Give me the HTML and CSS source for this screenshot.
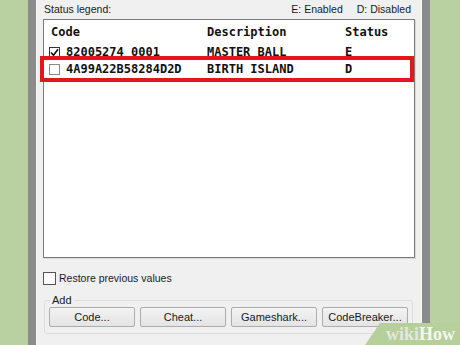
FILE: index.html
```html
<!DOCTYPE html>
<html>
	<head>
		<title>Cheats</title>
		<link rel="stylesheet" href="styles.css">
	</head>
	<body>
		<div class="window">
			<div class="panel">
				<div class="legend">
					<span class="legend-title">Status legend:</span>
					<span class="legend-item">E: Enabled</span>
					<span class="legend-item">D: Disabled</span>
				</div>
				<div class="list">
					<div class="row head">
						<span class="col-code">Code</span>
						<span>Description</span>
						<span>Status</span>
					</div>
					<div class="row">
						<span class="col-code"><span class="check checked">
							<svg width="9" height="9" viewBox="0 0 9 9"><path d="M1 4.5 L3.5 7.2 L8 1.2" fill="none" stroke="#111" stroke-width="1.6"/></svg>
						</span>82005274 0001</span>
						<span>MASTER BALL</span>
						<span>E</span>
					</div>
					<div class="row">
						<span class="col-code"><span class="check"></span>4A99A22B58284D2D</span>
						<span>BIRTH ISLAND</span>
						<span>D</span>
					</div>
				</div>
				<label class="restore"><span class="box"></span>Restore previous values</label>
				<fieldset class="group">
					<legend>Add</legend>
					<div class="buttons">
						<button>Code...</button>
						<button>Cheat...</button>
						<button>Gameshark...</button>
						<button>CodeBreaker...</button>
					</div>
				</fieldset>
			</div>
		</div>
		<div class="highlight"></div>
		<div class="wikihow"><span class="wiki">wiki</span><span class="how">How</span></div>
	</body>
</html>
```

FILE: styles.css
```css
body {
	margin: 0;
	padding: 0;
	width: 460px;
	height: 345px;
	overflow: hidden;
	background: #b9d1a0;
	font-family: "Liberation Sans", Arial, sans-serif;
	font-size: 10.5px;
	color: #1a1a1a;
	position: relative;
}

.window {
	margin-left: 28px;
	width: 386px;
	height: 345px;
	border-left: 8px solid #8b8b8b;
	border-right: 8px solid #8b8b8b;
	box-shadow: inset 1px 0 0 #fafafa, inset -1px 0 0 #fafafa;
	background: #f0f0f0;
}

.panel {
	padding: 0 7px;
}

.legend {
	display: flex;
	height: 19px;
	line-height: 18px;
	padding: 0 4px 0 1px;
}

.legend-title {
	flex: 1;
}

.legend-item {
	margin-left: 14px;
}

.list {
	height: 233px;
	border: 1px solid #7c7c7c;
	box-shadow: 1px 1px 0 #d8d8d8;
	background: #fff;
	padding: 4px 0 0 5px;
	font-family: "DejaVu Sans Mono", "Liberation Mono", monospace;
	font-weight: bold;
	font-size: 12px;
	color: #111;
}

.row {
	display: grid;
	grid-template-columns: 158px 138px 1fr;
	line-height: 17px;
	height: 17px;
	white-space: nowrap;
}

.row.head {
	margin-bottom: 3px;
}

.row.head .col-code {
	padding-left: 2px;
}

.col-code {
	display: flex;
	align-items: center;
}

.check {
	display: inline-flex;
	align-items: center;
	justify-content: center;
	box-sizing: border-box;
	width: 11px;
	height: 11px;
	margin-right: 6px;
	border: 1px solid #8a8a8a;
	background: #fff;
}

.check.checked {
	border-color: #333;
}

.restore {
	display: flex;
	align-items: center;
	height: 14px;
	margin-top: 13px;
	line-height: 14px;
}

.box {
	box-sizing: border-box;
	width: 13px;
	height: 13px;
	margin-right: 3px;
	border: 1px solid #555;
	background: #fff;
}

.group {
	margin: 9px 3px 0 1px;
	padding: 1px 4px 6px 4px;
	border: 1px solid #dcdcdc;
	border-radius: 3px;
}

.group legend {
	padding: 0 2px;
	margin-left: 1px;
	line-height: 12px;
	font-size: 11px;
}

.buttons {
	display: flex;
	gap: 5px;
}

button {
	width: 86px;
	height: 20px;
	padding: 0;
	font-family: "Liberation Sans", Arial, sans-serif;
	font-size: 11px;
	color: #1a1a1a;
	border: 1px solid #acacac;
	border-radius: 2px;
	background: linear-gradient(#f3f3f3, #e4e4e4);
}

.highlight {
	position: absolute;
	left: 40px;
	top: 56px;
	width: 366px;
	height: 18px;
	border: 4px solid #e2161b;
}

.wikihow {
	position: absolute;
	left: 365px;
	top: 323px;
	width: 95px;
	height: 22px;
	background: #b6cf9b;
	clip-path: polygon(15px 0, 100% 0, 100% 100%, 0 100%);
	font-family: "Liberation Serif", serif;
	font-weight: bold;
	font-size: 18px;
	line-height: 22px;
	padding-left: 21px;
	box-sizing: border-box;
	white-space: nowrap;
}

.wiki {
	color: #e4e7df;
}

.how {
	color: #f4f7ef;
}
```
